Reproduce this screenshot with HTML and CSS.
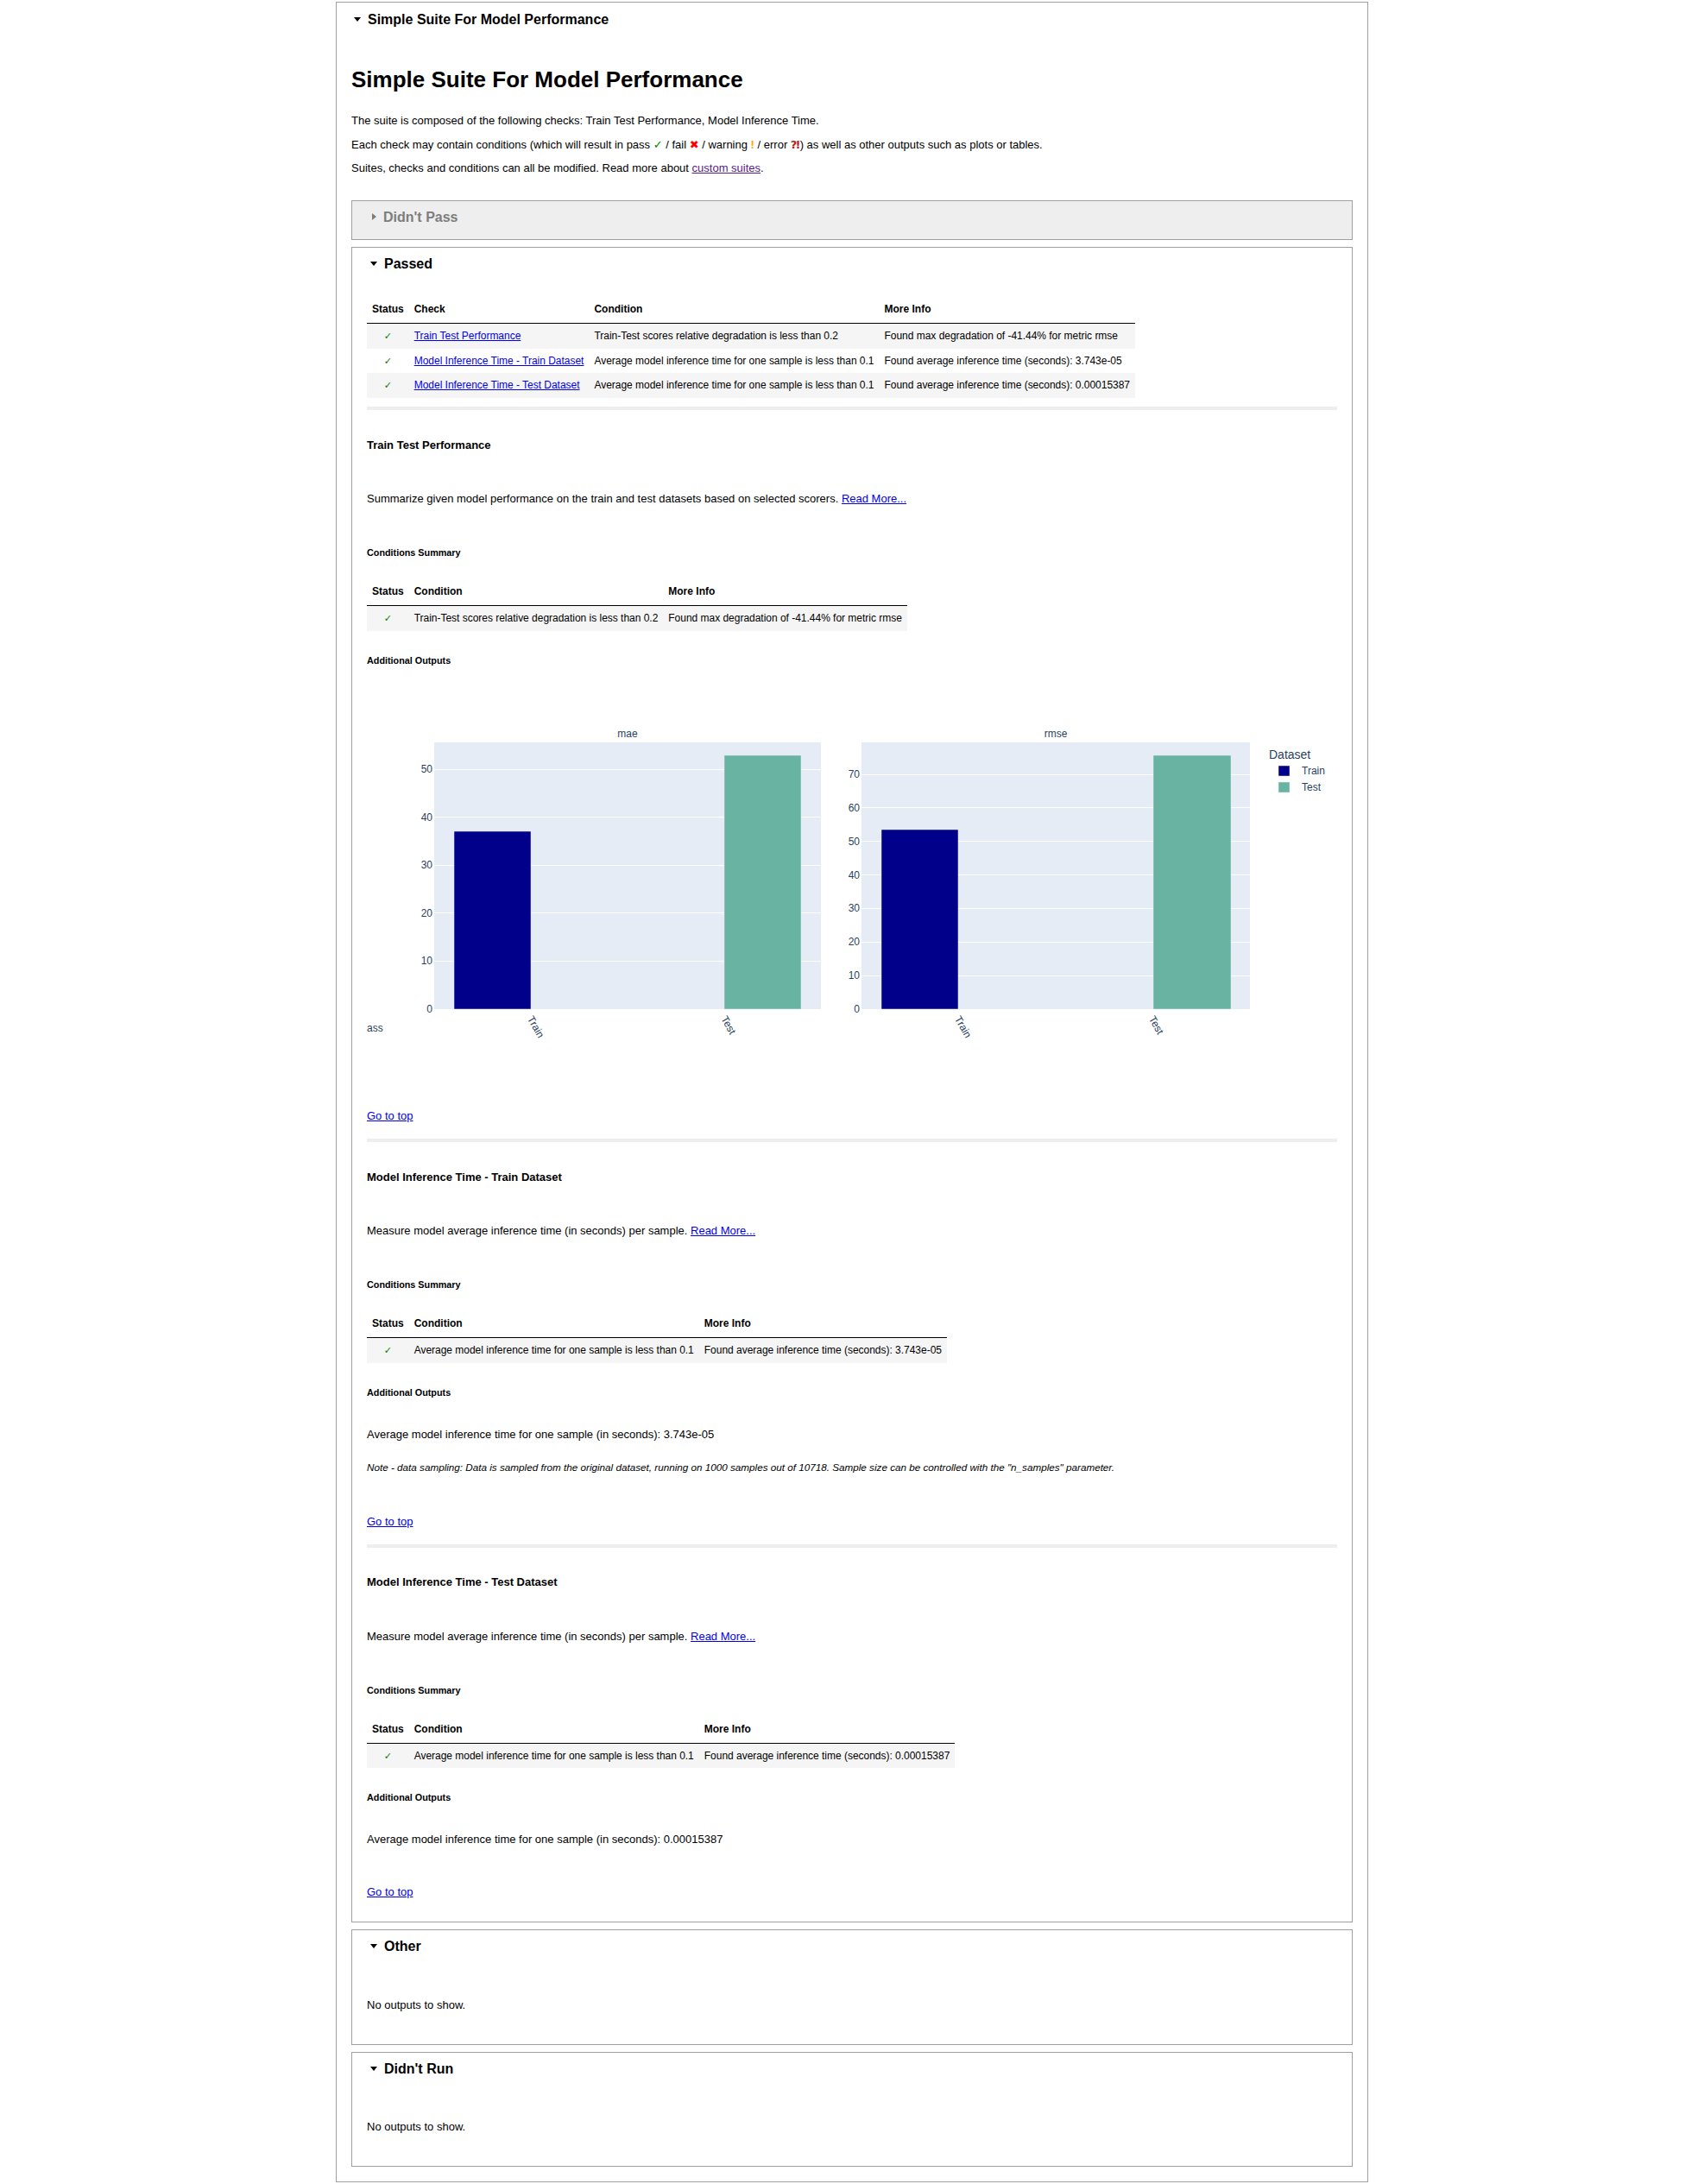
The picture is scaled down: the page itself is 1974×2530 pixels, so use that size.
FILE: index.html
```html
<!DOCTYPE html>
<html>
<head>
<meta charset="utf-8">
<title>Simple Suite For Model Performance</title>
<link rel="stylesheet" href="styles.css">
</head>
<body>
<details class="suite" open>
  <summary class="suite-summary tri-open">Simple Suite For Model Performance</summary>
  <h1 class="suite-title">Simple Suite For Model Performance</h1>
  <p class="intro first">The suite is composed of the following checks: Train Test Performance, Model Inference Time.</p>
  <p class="intro">Each check may contain conditions (which will result in pass <span class="c-pass">✓</span> / fail <span class="c-fail">✖</span> / warning <span class="c-warn">!</span> / error <span class="c-err">⁈</span>) as well as other outputs such as plots or tables.</p>
  <p class="intro">Suites, checks and conditions can all be modified. Read more about <a class="visited" href="#">custom suites</a>.</p>

  <details class="group closed-group">
    <summary class="group-summary tri-closed">Didn't Pass</summary>
  </details>

  <details class="group passed" open>
    <summary class="group-summary tri-open">Passed</summary>
    <table class="grid summary-table">
      <thead>
        <tr><th>Status</th><th>Check</th><th>Condition</th><th>More Info</th></tr>
      </thead>
      <tbody>
        <tr><td class="st"><span class="ok">✓</span></td><td><a href="#">Train Test Performance</a></td><td>Train-Test scores relative degradation is less than 0.2</td><td>Found max degradation of -41.44% for metric rmse</td></tr>
        <tr><td class="st"><span class="ok">✓</span></td><td><a href="#">Model Inference Time - Train Dataset</a></td><td>Average model inference time for one sample is less than 0.1</td><td>Found average inference time (seconds): 3.743e-05</td></tr>
        <tr><td class="st"><span class="ok">✓</span></td><td><a href="#">Model Inference Time - Test Dataset</a></td><td>Average model inference time for one sample is less than 0.1</td><td>Found average inference time (seconds): 0.00015387</td></tr>
      </tbody>
    </table>
    <hr class="sep first-sep">

    <section class="check">
      <h4 class="check-title">Train Test Performance</h4>
      <p class="desc">Summarize given model performance on the train and test datasets based on selected scorers. <a href="#">Read More...</a></p>
      <h5 class="sub">Conditions Summary</h5>
      <table class="grid cond-table">
        <thead><tr><th>Status</th><th>Condition</th><th>More Info</th></tr></thead>
        <tbody>
          <tr><td class="st"><span class="ok">✓</span></td><td>Train-Test scores relative degradation is less than 0.2</td><td>Found max degradation of -41.44% for metric rmse</td></tr>
        </tbody>
      </table>
      <h5 class="sub add">Additional Outputs</h5>
      <svg class="chart" width="1124" height="500" viewBox="0 0 1124 500">
        <g class="plot">
          <rect x="78" y="79" width="448" height="309" fill="#e5ecf6"/>
          <g stroke="#ffffff" stroke-width="1">
            <line x1="78" x2="526" y1="332.5" y2="332.5"/>
            <line x1="78" x2="526" y1="276.5" y2="276.5"/>
            <line x1="78" x2="526" y1="221.5" y2="221.5"/>
            <line x1="78" x2="526" y1="165.5" y2="165.5"/>
            <line x1="78" x2="526" y1="110.5" y2="110.5"/>
          </g>
          <rect x="101" y="182" width="89" height="206" fill="#00008b" stroke="#e5ecf6" stroke-width="0.5"/>
          <rect x="414" y="94" width="89" height="294" fill="#69b3a2" stroke="#e5ecf6" stroke-width="0.5"/>

          <rect x="573" y="79" width="450" height="309" fill="#e5ecf6"/>
          <g stroke="#ffffff" stroke-width="1">
            <line x1="573" x2="1023" y1="349.5" y2="349.5"/>
            <line x1="573" x2="1023" y1="310.5" y2="310.5"/>
            <line x1="573" x2="1023" y1="271.5" y2="271.5"/>
            <line x1="573" x2="1023" y1="232.5" y2="232.5"/>
            <line x1="573" x2="1023" y1="193.5" y2="193.5"/>
            <line x1="573" x2="1023" y1="154.5" y2="154.5"/>
            <line x1="573" x2="1023" y1="116.5" y2="116.5"/>
          </g>
          <rect x="596" y="180" width="89" height="208" fill="#00008b" stroke="#e5ecf6" stroke-width="0.5"/>
          <rect x="911" y="94" width="90" height="294" fill="#69b3a2" stroke="#e5ecf6" stroke-width="0.5"/>
        </g>
        <g class="chart-text" font-family="Liberation Sans, Arial, sans-serif" font-size="12" fill="#2a3f5f">
          <text x="302" y="73" text-anchor="middle">mae</text>
          <text x="798" y="73" text-anchor="middle">rmse</text>
          <g text-anchor="end">
            <text x="76" y="392">0</text>
            <text x="76" y="336.4">10</text>
            <text x="76" y="280.8">20</text>
            <text x="76" y="225.2">30</text>
            <text x="76" y="169.6">40</text>
            <text x="76" y="114">50</text>
            <text x="571" y="392">0</text>
            <text x="571" y="353.1">10</text>
            <text x="571" y="314.3">20</text>
            <text x="571" y="275.4">30</text>
            <text x="571" y="236.6">40</text>
            <text x="571" y="197.7">50</text>
            <text x="571" y="158.8">60</text>
            <text x="571" y="120">70</text>
          </g>
          <text transform="translate(185.5 399) rotate(60)">Train</text>
          <text transform="translate(410 399) rotate(60)">Test</text>
          <text transform="translate(680.5 399) rotate(60)">Train</text>
          <text transform="translate(905.5 399) rotate(60)">Test</text>
          <text x="0" y="414">ass</text>
          <text x="1045" y="98" font-size="14">Dataset</text>
          <rect x="1056" y="106" width="13" height="12" fill="#00008b" stroke="#e5ecf6" stroke-width="0.5"/>
          <text x="1083" y="116">Train</text>
          <rect x="1056" y="125" width="13" height="12" fill="#69b3a2" stroke="#e5ecf6" stroke-width="0.5"/>
          <text x="1083" y="135">Test</text>
        </g>
      </svg>
      <p class="top-link first-top"><a href="#">Go to top</a></p>
      <hr class="sep">
    </section>

    <section class="check">
      <h4 class="check-title">Model Inference Time - Train Dataset</h4>
      <p class="desc">Measure model average inference time (in seconds) per sample. <a href="#">Read More...</a></p>
      <h5 class="sub">Conditions Summary</h5>
      <table class="grid cond-table">
        <thead><tr><th>Status</th><th>Condition</th><th>More Info</th></tr></thead>
        <tbody>
          <tr><td class="st"><span class="ok">✓</span></td><td>Average model inference time for one sample is less than 0.1</td><td>Found average inference time (seconds): 3.743e-05</td></tr>
        </tbody>
      </table>
      <h5 class="sub add">Additional Outputs</h5>
      <p class="avg">Average model inference time for one sample (in seconds): 3.743e-05</p>
      <p class="note"><i>Note - data sampling: Data is sampled from the original dataset, running on 1000 samples out of 10718. Sample size can be controlled with the "n_samples" parameter.</i></p>
      <p class="top-link after-note"><a href="#">Go to top</a></p>
      <hr class="sep">
    </section>

    <section class="check">
      <h4 class="check-title">Model Inference Time - Test Dataset</h4>
      <p class="desc">Measure model average inference time (in seconds) per sample. <a href="#">Read More...</a></p>
      <h5 class="sub">Conditions Summary</h5>
      <table class="grid cond-table">
        <thead><tr><th>Status</th><th>Condition</th><th>More Info</th></tr></thead>
        <tbody>
          <tr><td class="st"><span class="ok">✓</span></td><td>Average model inference time for one sample is less than 0.1</td><td>Found average inference time (seconds): 0.00015387</td></tr>
        </tbody>
      </table>
      <h5 class="sub add">Additional Outputs</h5>
      <p class="avg">Average model inference time for one sample (in seconds): 0.00015387</p>
      <p class="top-link after-avg"><a href="#">Go to top</a></p>
    </section>
  </details>

  <details class="group empty" open>
    <summary class="group-summary tri-open">Other</summary>
    <p class="none">No outputs to show.</p>
  </details>

  <details class="group empty" open>
    <summary class="group-summary tri-open">Didn't Run</summary>
    <p class="none">No outputs to show.</p>
  </details>
</details>
</body>
</html>
```

FILE: styles.css
```css
* { box-sizing: border-box; }

html, body {
  margin: 0;
  padding: 0;
  background: #ffffff;
}

body {
  font-family: "Liberation Sans", Arial, "DejaVu Sans", sans-serif;
  font-size: 13px;
  line-height: 16px;
  color: #000000;
}

a { color: #0000ee; text-decoration: underline; }
a.visited { color: #551a8b; }

summary { display: block; list-style: none; cursor: pointer; }
summary::-webkit-details-marker { display: none; }

.tri-open::before {
  content: "";
  display: inline-block;
  width: 0;
  height: 0;
  border-left: 4px solid transparent;
  border-right: 4px solid transparent;
  border-top: 5px solid currentColor;
  vertical-align: 3px;
  margin-right: 8px;
}

.tri-closed::before {
  content: "";
  display: inline-block;
  width: 0;
  height: 0;
  border-top: 4px solid transparent;
  border-bottom: 4px solid transparent;
  border-left: 5px solid currentColor;
  vertical-align: 2px;
  margin-right: 8px;
}

/* outer suite */
.suite {
  width: 1196px;
  margin: 2px auto 0;
  border: 1px solid #a0a0a0;
  padding: 0 17px 17px;
}

.suite-summary {
  padding: 10px 0 0 3px;
  font-size: 16px;
  line-height: 20px;
  font-weight: bold;
}

.suite-title {
  margin: 44px 0 0;
  font-size: 26px;
  line-height: 30px;
  font-weight: bold;
}

.intro { margin: 11.5px 0 0; line-height: 16px; }
.intro.first { margin-top: 25px; }

.c-pass { color: green; }
.c-fail { color: red; }
.c-warn { color: orange; font-weight: bold; }
.c-err { color: firebrick; font-weight: bold; }

/* groups */
.group {
  border: 1px solid #a0a0a0;
  margin-top: 8px;
  padding: 0 17px;
}

.group-summary {
  padding: 9px 0 0 4px;
  font-size: 16px;
  line-height: 20px;
  font-weight: bold;
}

.closed-group {
  margin-top: 29px;
  background: #eeeeee;
}

.closed-group .group-summary {
  padding: 9px 0 15px 6px;
  color: #7d7d7d;
}

.passed { padding-bottom: 26px; }

.empty { padding-bottom: 37px; }

.none { margin: 49.5px 0 0; line-height: 16px; }

/* tables */
.grid {
  border-collapse: separate;
  border-spacing: 0;
  font-size: 12px;
}

.grid th {
  text-align: left;
  font-weight: bold;
  padding: 8px 6px;
  line-height: 16px;
  border-bottom: 1px solid #000000;
  white-space: nowrap;
}

.grid td {
  text-align: left;
  vertical-align: middle;
  padding: 0 6px;
  height: 28.5px;
  line-height: 16px;
  white-space: nowrap;
  letter-spacing: -0.02px;
}

.grid tbody tr:nth-child(odd) { background: #f5f5f5; }

.grid td.st { text-align: center; }

.ok { color: green; font-size: 11px; line-height: 12px; }

.summary-table { margin-top: 26px; }

.sep {
  border: 0;
  height: 4px;
  background: #eeeeee;
  margin: 18px 0 0;
}

.first-sep { margin-top: 10.5px; }

/* check sections */
.check-title {
  margin: 32.5px 0 0;
  font-size: 13px;
  line-height: 16px;
  font-weight: bold;
}

.desc { margin: 46.5px 0 0; }

.sub {
  margin: 47px 0 0;
  font-size: 10.8px;
  line-height: 14px;
  font-weight: bold;
}

.sub.add { margin-top: 27px; }

.cond-table { margin-top: 22px; }

.chart {
  display: block;
  margin-top: 9.5px;
}

.top-link { margin: 4px 0 0; }
.top-link.after-note { margin-top: 48px; }
.top-link.after-avg { margin-top: 45px; }

.avg { margin: 34px 0 0; }

.note {
  margin: 23px 0 0;
  font-size: 0.9em;
  line-height: 14px;
}
```
